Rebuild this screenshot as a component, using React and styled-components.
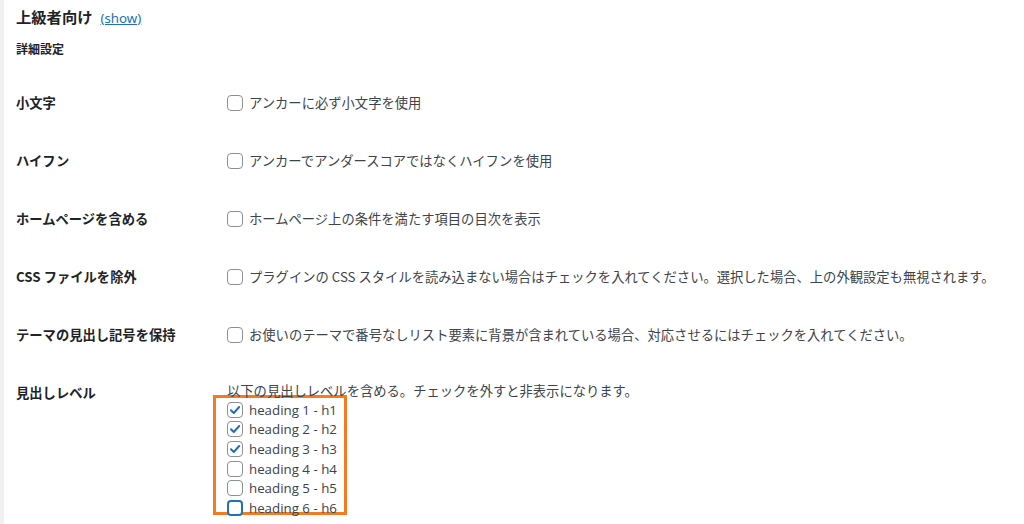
import React from 'react';
import styled, { createGlobalStyle } from 'styled-components';

const GlobalStyle = createGlobalStyle`
  html, body {
    margin: 0;
    padding: 0;
    background: #ffffff;
  }
  body {
    font-family: "Noto Sans CJK JP", "Noto Sans", sans-serif;
    color: #1d2327;
  }
`;

// Page - thin grey admin edge on the left, white content
const Page = styled.div`
  width: 1024px;
  height: 524px;
  overflow: hidden;
  border-left: 4px solid #f0f0f1;
  box-sizing: border-box;
  padding: 5px 0 0 12px;
`;

const Title = styled.h3`
  margin: 0;
  font-size: 15.3px;
  font-weight: 700;
  line-height: 22px;
  color: #1d2327;
  display: flex;
  align-items: baseline;
  gap: 8px;
`;

const ShowLink = styled.a`
  font-size: 13.3px;
  font-weight: 400;
  color: #2271b1;
  text-decoration: underline;
  font-family: "Noto Sans", sans-serif;
  cursor: pointer;
`;

const SubTitle = styled.h4`
  margin: 10px 0 0;
  font-size: 12px;
  font-weight: 700;
  line-height: 20px;
  color: #1d2327;
`;

const Table = styled.div`
  margin-top: 35px;
  display: grid;
  grid-template-columns: 211px 1fr;
  row-gap: 40px;
`;

const Label = styled.div`
  font-size: 13.3px;
  font-weight: 700;
  line-height: 18px;
  color: #1d2327;
  white-space: nowrap;
`;

const Cell = styled.div`
  font-size: 13.3px;
  line-height: 18px;
  color: #3c434a;
  white-space: nowrap;
`;

const Intro = styled.div`
  margin-top: -2px;
`;

const Option = styled.label`
  display: flex;
  align-items: center;
  gap: 6px;
  height: ${(p) => (p.compact ? '19.6px' : '18px')};
`;

const Box = styled.span`
  width: 16px;
  height: 16px;
  box-sizing: border-box;
  border: ${(p) => (p.focused ? '2px solid #2271b1' : '1px solid #8c8f94')};
  border-radius: 4px;
  background: #fff;
  display: flex;
  align-items: center;
  justify-content: center;
  flex-shrink: 0;
`;

const Latin = styled.span`
  font-family: "Open Sans", "Noto Sans", sans-serif;
  font-size: 13.3px;
`;

const LevelList = styled.div`
  margin: -5px 0 0 -14px;
  width: 134px;
  box-sizing: border-box;
  border: 3px solid #f47b22;
  padding: 2px 0 0 11px;
  height: 120px;
`;

function Check({ checked, focused }) {
  return (
    <Box focused={focused}>
      {checked && (
        <svg width="14" height="14" viewBox="0 0 14 14">
          <path d="M3 7.2l2.8 2.8L11.2 4" fill="none" stroke="#2271b1" strokeWidth="2" strokeLinecap="round" strokeLinejoin="round" />
        </svg>
      )}
    </Box>
  );
}

const ROWS = [
  { label: '小文字', text: 'アンカーに必ず小文字を使用' },
  { label: 'ハイフン', text: 'アンカーでアンダースコアではなくハイフンを使用' },
  { label: 'ホームページを含める', text: 'ホームページ上の条件を満たす項目の目次を表示' },
  { label: 'CSS ファイルを除外', text: 'プラグインの CSS スタイルを読み込まない場合はチェックを入れてください。選択した場合、上の外観設定も無視されます。' },
  { label: 'テーマの見出し記号を保持', text: 'お使いのテーマで番号なしリスト要素に背景が含まれている場合、対応させるにはチェックを入れてください。' },
];

const LEVELS = [1, 2, 3, 4, 5, 6];

export default function App() {
  return (
    <>
      <GlobalStyle />
      <Page>
        <Title>
          上級者向け <ShowLink>(show)</ShowLink>
        </Title>
        <SubTitle>詳細設定</SubTitle>
        <Table>
          {ROWS.map((row) => (
            <React.Fragment key={row.label}>
              <Label>{row.label}</Label>
              <Cell>
                <Option>
                  <Check />
                  {row.text}
                </Option>
              </Cell>
            </React.Fragment>
          ))}
          <Label>見出しレベル</Label>
          <Cell>
            <Intro>以下の見出しレベルを含める。チェックを外すと非表示になります。</Intro>
            <LevelList>
              {LEVELS.map((n) => (
                <Option compact key={n}>
                  <Check checked={n <= 3} focused={n === 6} />
                  <Latin>heading {n} - h{n}</Latin>
                </Option>
              ))}
            </LevelList>
          </Cell>
        </Table>
      </Page>
    </>
  );
}
